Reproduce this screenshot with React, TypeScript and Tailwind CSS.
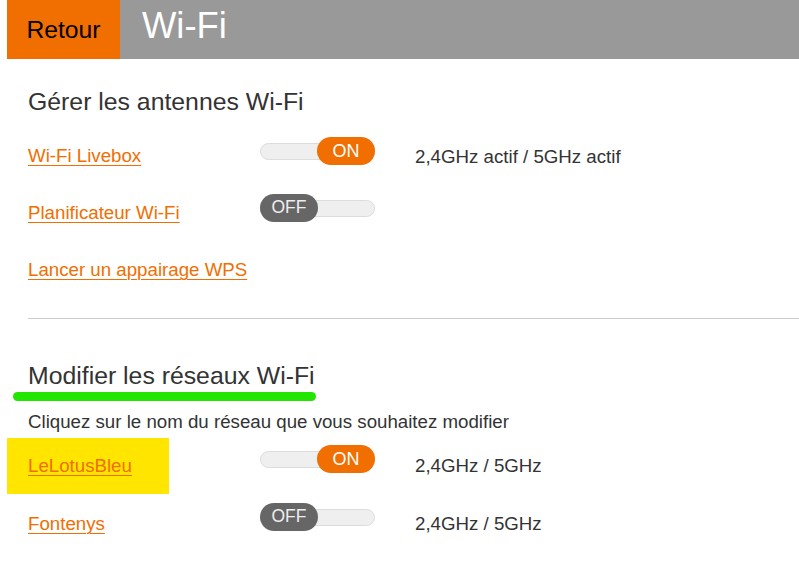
import React from "react";

type Net = {
  name: string;
  on: boolean;
  status?: string;
};

const antennes: Net[] = [
  { name: "Wi-Fi Livebox", on: true, status: "2,4GHz actif / 5GHz actif" },
  { name: "Planificateur Wi-Fi", on: false },
];

const reseaux: Net[] = [
  { name: "LeLotusBleu", on: true, status: "2,4GHz / 5GHz" },
  { name: "Fontenys", on: false, status: "2,4GHz / 5GHz" },
];

function Toggle({ on }: { on: boolean }) {
  return (
    <div className="relative flex h-[28px] w-[115px] shrink-0 items-center">
      <div className="h-[17px] w-full rounded-full border border-[#dcdcdc] bg-[#efefef]" />
      {on ? (
        <div className="absolute right-0 top-0 flex h-[28px] w-[58px] items-center justify-center rounded-full bg-[#f16e00] text-[18px] leading-none text-white">
          ON
        </div>
      ) : (
        <div className="absolute left-0 top-0 flex h-[28px] w-[58px] items-center justify-center rounded-full bg-[#666666] text-[17.5px] leading-none text-[#eeeeee]">
          OFF
        </div>
      )}
    </div>
  );
}

function Link({ children }: { children: React.ReactNode }) {
  return (
    <a
      href="#"
      className="text-[18.7px] leading-[28px] text-[#f16e00] underline decoration-1 underline-offset-[3px]"
    >
      {children}
    </a>
  );
}

export default function App() {
  return (
    <div className="min-h-screen bg-white pl-[7px] font-['Liberation_Sans',Arial,sans-serif] text-[#333333]">
      <div className="flex h-[59px]">
        <button className="flex w-[113px] items-center justify-center bg-[#f16e00] text-[24.7px] text-black">
          Retour
        </button>
        <div className="flex flex-1 items-center bg-[#999999] pb-[6px] pl-[22px] text-[36.4px] text-white">
          Wi-Fi
        </div>
      </div>

      <div className="pl-[21px]">
        <h2 className="mt-[27px] text-[24.8px] leading-[32px]">
          Gérer les antennes Wi-Fi
        </h2>

        <div className="mt-[19px]">
          {antennes.map((a) => (
            <div key={a.name} className="flex h-[57px] items-start">
              <div className="mt-[5px] w-[232px] shrink-0">
                <Link>{a.name}</Link>
              </div>
              <Toggle on={a.on} />
              {a.status && (
                <span className="ml-[40px] mt-[6px] text-[18.7px] leading-[28px]">
                  {a.status}
                </span>
              )}
            </div>
          ))}
          <div className="flex h-[57px] items-start">
            <div className="mt-[5px]">
              <Link>Lancer un appairage WPS</Link>
            </div>
          </div>
        </div>

        <div className="mt-[10px] h-px bg-[#cccccc]" />

        <div className="relative mt-[41px] w-fit">
          <h2 className="text-[24.8px] leading-[32px]">
            Modifier les réseaux Wi-Fi
          </h2>
          <div className="absolute left-[-15px] top-[32px] h-[9px] w-[303px] rounded-full bg-[#22e600]" />
        </div>

        <p className="mt-[16px] text-[18.7px] leading-[28px]">
          Cliquez sur le nom du réseau que vous souhaitez modifier
        </p>

        <div className="mt-[9px]">
          {reseaux.map((r, i) => (
            <div key={r.name} className="relative flex h-[58px] items-start">
              {i === 0 && (
                <div className="absolute left-[-21px] top-[-7px] h-[56px] w-[162px] bg-[#ffe500]" />
              )}
              <div className="relative mt-[7px] w-[232px] shrink-0">
                <Link>{r.name}</Link>
              </div>
              <Toggle on={r.on} />
              {r.status && (
                <span className="ml-[40px] mt-[7px] text-[18.7px] leading-[28px]">
                  {r.status}
                </span>
              )}
            </div>
          ))}
        </div>
      </div>
    </div>
  );
}
